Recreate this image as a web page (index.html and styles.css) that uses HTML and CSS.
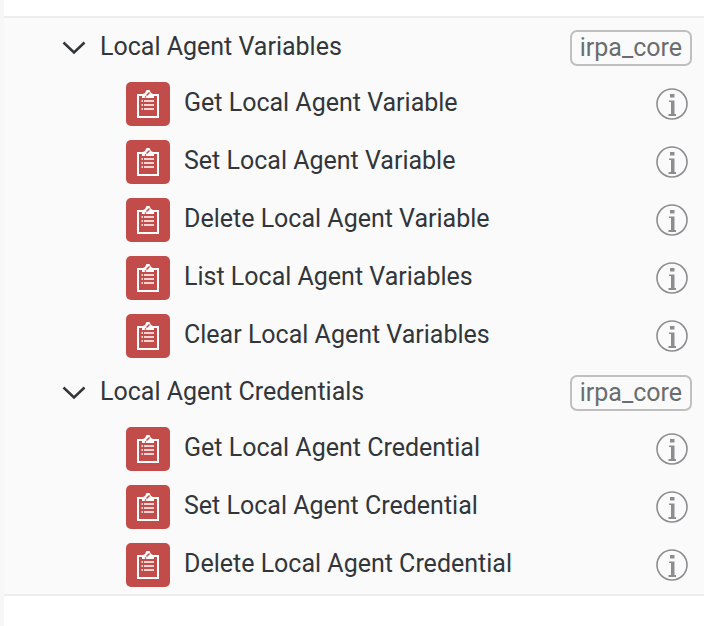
FILE: index.html
```html
<!DOCTYPE html>
<html lang="en">
<head>
    <meta charset="UTF-8">
    <title>Local Agent Activities</title>
    <meta name="viewport" content="width=device-width, initial-scale=1.0">
    <link rel="stylesheet" href="styles.css">
</head>
<body>
    <!-- shared icons -->
    <svg class="sprite" aria-hidden="true">
        <symbol id="chevron" viewBox="0 0 24 14">
            <path d="M1.5 1.5 L12 11.5 L22.5 1.5" fill="none" stroke="#32363a" stroke-width="2.5"/>
        </symbol>
        <symbol id="clipboard" viewBox="0 0 22 28">
            <path d="M1 5H21V27H1Z" fill="none" stroke="#fff" stroke-width="2"/>
            <path d="M5 8V4.500L8 3L9.500 0H12.500L14 3L17 4.500V8Z" fill="#fff"/>
            <path d="M9.500 5.500L12.500 2.500M8 7.500L9 6.500" fill="none" stroke="#c14c49" stroke-width="1.500"/>
            <path d="M4.500 11H6M7 11H17M4.500 15H6M7 15H17M4.500 19H6M7 19H17" fill="none" stroke="#fff" stroke-width="1.600"/>
        </symbol>
        <symbol id="info" viewBox="0 0 32 32">
            <circle cx="16" cy="16" r="15" fill="none" stroke="#8b8d8f" stroke-width="1.6"/>
            <path d="M14 6H18.500V9.500H14ZM13 12.500H18.500V26H20V28H12.500V26H15V14H13Z" fill="#8b8d8f"/>
        </symbol>
    </svg>

    <main class="panel">
        <section>
            <div class="group">
                <button class="toggle" aria-expanded="true"><svg class="chevron"><use href="#chevron"/></svg><span class="name">Local Agent Variables</span></button>
                <span class="badge">irpa_core</span>
            </div>
            <ul class="items">
                <li class="item"><span class="tile"><svg><use href="#clipboard"/></svg></span><span class="name">Get Local Agent Variable</span><button class="info" aria-label="Info"><svg><use href="#info"/></svg></button></li>
                <li class="item"><span class="tile"><svg><use href="#clipboard"/></svg></span><span class="name">Set Local Agent Variable</span><button class="info" aria-label="Info"><svg><use href="#info"/></svg></button></li>
                <li class="item"><span class="tile"><svg><use href="#clipboard"/></svg></span><span class="name">Delete Local Agent Variable</span><button class="info" aria-label="Info"><svg><use href="#info"/></svg></button></li>
                <li class="item"><span class="tile"><svg><use href="#clipboard"/></svg></span><span class="name">List Local Agent Variables</span><button class="info" aria-label="Info"><svg><use href="#info"/></svg></button></li>
                <li class="item"><span class="tile"><svg><use href="#clipboard"/></svg></span><span class="name">Clear Local Agent Variables</span><button class="info" aria-label="Info"><svg><use href="#info"/></svg></button></li>
            </ul>
        </section>
        <section>
            <div class="group">
                <button class="toggle" aria-expanded="true"><svg class="chevron"><use href="#chevron"/></svg><span class="name">Local Agent Credentials</span></button>
                <span class="badge">irpa_core</span>
            </div>
            <ul class="items">
                <li class="item"><span class="tile"><svg><use href="#clipboard"/></svg></span><span class="name">Get Local Agent Credential</span><button class="info" aria-label="Info"><svg><use href="#info"/></svg></button></li>
                <li class="item"><span class="tile"><svg><use href="#clipboard"/></svg></span><span class="name">Set Local Agent Credential</span><button class="info" aria-label="Info"><svg><use href="#info"/></svg></button></li>
                <li class="item"><span class="tile"><svg><use href="#clipboard"/></svg></span><span class="name">Delete Local Agent Credential</span><button class="info" aria-label="Info"><svg><use href="#info"/></svg></button></li>
            </ul>
        </section>
    </main>
</body>
</html>
```
FILE: styles.css
```css
body {
    margin: 0;
    padding-top: 16px;
    min-height: 100vh;
    box-sizing: border-box;
    border-left: 4px solid #f7f7f7;
    background-color: #fff;
    color: #32363a;
    font-family: Roboto, Arial, sans-serif;
    font-size: 25px;
    line-height: 32px;
}
button {
    padding: 0;
    border: none;
    background: none;
    color: inherit;
    font: inherit;
    cursor: pointer;
}
svg {
    display: block;
}
.sprite {
    display: none;
}
.panel {
    padding-top: 2px;
    background-color: #fafafa;
    border-top: 2px solid #ededed;
    border-bottom: 2px solid #ededed;
}
.group {
    display: flex;
    align-items: center;
    justify-content: space-between;
    height: 55px;
    padding: 0 12px 0 58px;
}
.toggle {
    display: flex;
    align-items: center;
    gap: 14px;
}
.chevron {
    width: 24px;
    height: 14px;
}
.name {
    padding-bottom: 2px;
    white-space: nowrap;
}
.badge {
    padding: 0 8px;
    border: 2px solid #bfbfbf;
    border-radius: 7px;
    color: #6a6d70;
}
.items {
    margin: 0;
    padding: 0;
    list-style: none;
}
.item {
    display: flex;
    align-items: center;
    height: 58px;
    padding: 0 16px 0 122px;
}
.tile {
    display: flex;
    align-items: center;
    justify-content: center;
    width: 44px;
    height: 44px;
    margin-right: 14px;
    border-radius: 5px;
    background-color: #c14c49;
}
.tile svg {
    width: 22px;
    height: 28px;
}
.info {
    margin-left: auto;
}
.info svg {
    width: 32px;
    height: 32px;
}
```
